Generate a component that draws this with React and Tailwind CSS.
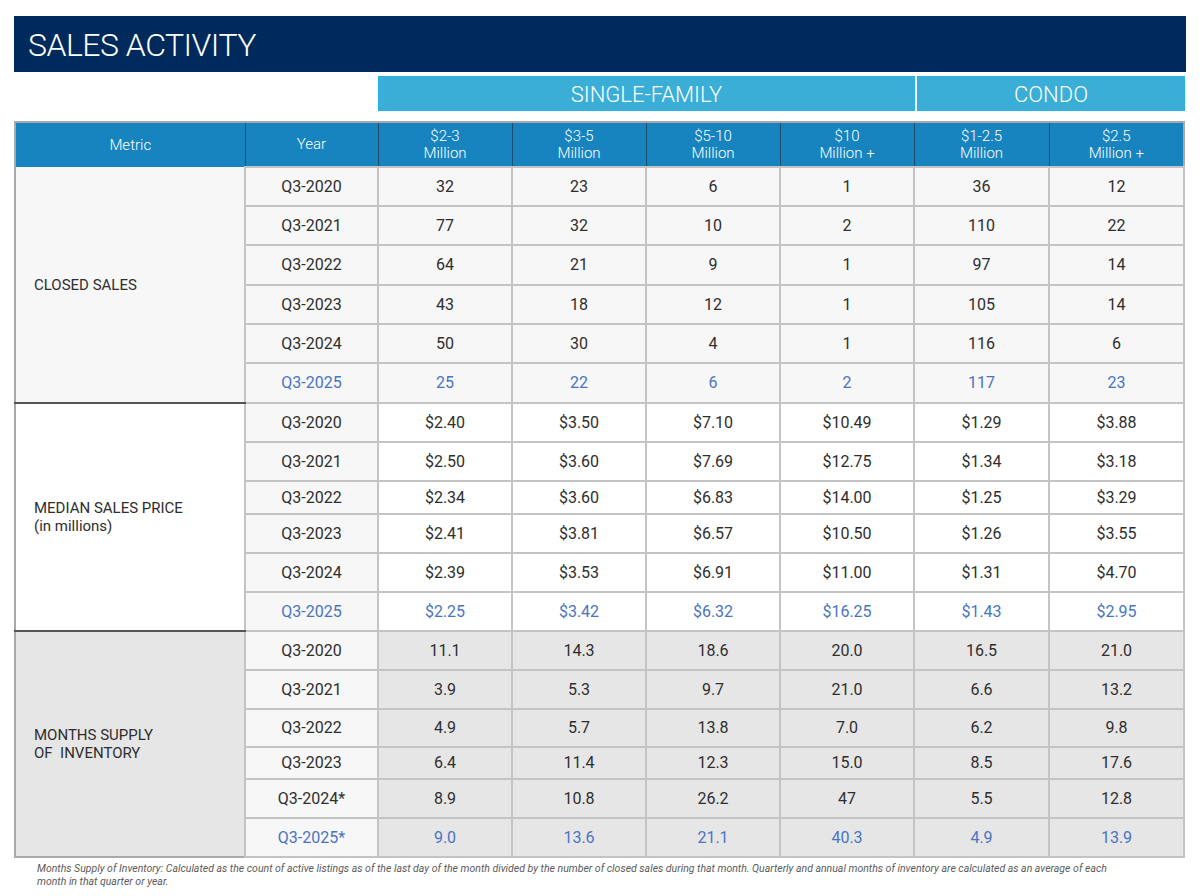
const cols = ['$2-3|Million', '$3-5|Million', '$5-10|Million', '$10|Million +', '$1-2.5|Million', '$2.5|Million +'];

const sections = [
  {
    label: ['CLOSED SALES'],
    bg: 'bg-[#f7f7f7]',
    metricBg: 'bg-[#f7f7f7]',
    rows: [
      { y: 'Q3-2020', h: 'h-[39px]', v: ['32', '23', '6', '1', '36', '12'] },
      { y: 'Q3-2021', h: 'h-[39px]', v: ['77', '32', '10', '2', '110', '22'] },
      { y: 'Q3-2022', h: 'h-[40px]', v: ['64', '21', '9', '1', '97', '14'] },
      { y: 'Q3-2023', h: 'h-[39px]', v: ['43', '18', '12', '1', '105', '14'] },
      { y: 'Q3-2024', h: 'h-[39px]', v: ['50', '30', '4', '1', '116', '6'] },
      { y: 'Q3-2025', h: 'h-[40px]', v: ['25', '22', '6', '2', '117', '23'], hl: true },
    ],
  },
  {
    label: ['MEDIAN SALES PRICE', '(in millions)'],
    bg: 'bg-white',
    metricBg: 'bg-white',
    rows: [
      { y: 'Q3-2020', h: 'h-[39px]', v: ['$2.40', '$3.50', '$7.10', '$10.49', '$1.29', '$3.88'] },
      { y: 'Q3-2021', h: 'h-[39px]', v: ['$2.50', '$3.60', '$7.69', '$12.75', '$1.34', '$3.18'] },
      { y: 'Q3-2022', h: 'h-[33px]', v: ['$2.34', '$3.60', '$6.83', '$14.00', '$1.25', '$3.29'] },
      { y: 'Q3-2023', h: 'h-[39px]', v: ['$2.41', '$3.81', '$6.57', '$10.50', '$1.26', '$3.55'] },
      { y: 'Q3-2024', h: 'h-[39px]', v: ['$2.39', '$3.53', '$6.91', '$11.00', '$1.31', '$4.70'] },
      { y: 'Q3-2025', h: 'h-[39px]', v: ['$2.25', '$3.42', '$6.32', '$16.25', '$1.43', '$2.95'], hl: true },
    ],
  },
  {
    label: ['MONTHS SUPPLY', 'OF  INVENTORY'],
    bg: 'bg-[#e6e6e7]',
    metricBg: 'bg-[#e6e6e7]',
    rows: [
      { y: 'Q3-2020', h: 'h-[39px]', v: ['11.1', '14.3', '18.6', '20.0', '16.5', '21.0'] },
      { y: 'Q3-2021', h: 'h-[39px]', v: ['3.9', '5.3', '9.7', '21.0', '6.6', '13.2'] },
      { y: 'Q3-2022', h: 'h-[38px]', v: ['4.9', '5.7', '13.8', '7.0', '6.2', '9.8'] },
      { y: 'Q3-2023', h: 'h-[32px]', v: ['6.4', '11.4', '12.3', '15.0', '8.5', '17.6'] },
      { y: 'Q3-2024*', h: 'h-[39px]', v: ['8.9', '10.8', '26.2', '47', '5.5', '12.8'] },
      { y: 'Q3-2025*', h: 'h-[39px]', v: ['9.0', '13.6', '21.1', '40.3', '4.9', '13.9'], hl: true },
    ],
  },
];

export default function App() {
  return (
    <div className="w-[1200px] h-[896px] bg-white pt-4 pl-[14px] font-['Roboto',sans-serif] text-[#2e2e2e]">
      <div className="w-[1172px] h-14 bg-[#012a5c] flex items-center pl-[14px]">
        <h1 className="text-white text-[32px] font-light tracking-[-0.5px] leading-none mt-[2px]">SALES ACTIVITY</h1>
      </div>

      <div className="flex mt-1 ml-[364px] h-[35px]">
        <div className="w-[537px] bg-[#3aaed6] border border-[#22b4e4] flex items-center justify-center text-white text-[22px] font-light pt-[2px]">
          SINGLE-FAMILY
        </div>
        <div className="w-[268px] ml-[2px] bg-[#3aaed6] border border-[#22b4e4] flex items-center justify-center text-white text-[22px] font-light pt-[2px]">
          CONDO
        </div>
      </div>

      <table className="mt-[10px] w-[1169px] table-fixed border-collapse border-2 border-[#a9a9a9] text-[16px]">
        <colgroup>
          <col className="w-[230px]" />
          <col className="w-[133px]" />
          <col className="w-[134px]" />
          <col className="w-[134px]" />
          <col className="w-[134px]" />
          <col className="w-[134px]" />
          <col className="w-[135px]" />
          <col className="w-[135px]" />
        </colgroup>
        <thead>
          <tr className="h-[45px] bg-[#1884bf] text-white text-[15px]">
            <th className="font-light border-r border-[#1f4d6d]">Metric</th>
            <th className="font-light border-r border-[#1f4d6d]">Year</th>
            {cols.map((c, i) => (
              <th key={i} className="font-light leading-[17px] border-r border-[#1f4d6d]">
                {c.split('|')[0]}
                <br />
                {c.split('|')[1]}
              </th>
            ))}
          </tr>
        </thead>
        <tbody>
          {sections.map((s, si) =>
            s.rows.map((r, ri) => (
              <tr key={si + '-' + ri} className={r.h}>
                {ri === 0 && (
                  <td
                    rowSpan={6}
                    className={`${s.metricBg} pl-[18px] text-[15px] leading-[18px] align-middle border-r border-[#b3b3b3] ${si < 2 ? 'border-b-2 border-b-[#555555]' : ''}`}
                  >
                    {s.label.map((l, li) => (
                      <div key={li} className="whitespace-pre">{l}</div>
                    ))}
                  </td>
                )}
                <td className={`bg-[#f7f7f7] text-center border-2 border-[#c4c4c4] ${r.hl ? 'text-[#4a74c2]' : ''}`}>{r.y}</td>
                {r.v.map((v, vi) => (
                  <td key={vi} className={`${s.bg} text-center border-2 border-[#c4c4c4] ${r.hl ? 'text-[#4a74c2]' : ''}`}>
                    {v}
                  </td>
                ))}
              </tr>
            ))
          )}
        </tbody>
      </table>

      <p className="mt-[4px] ml-[23px] w-[1080px] text-[10.5px] leading-[13px] italic text-[#5a5a5a]">
        Months Supply of Inventory: Calculated as the count of active listings as of the last day of the month divided by the number of closed sales during that month. Quarterly and annual months of inventory are calculated as an average of each month in that quarter or year.
      </p>
    </div>
  );
}
